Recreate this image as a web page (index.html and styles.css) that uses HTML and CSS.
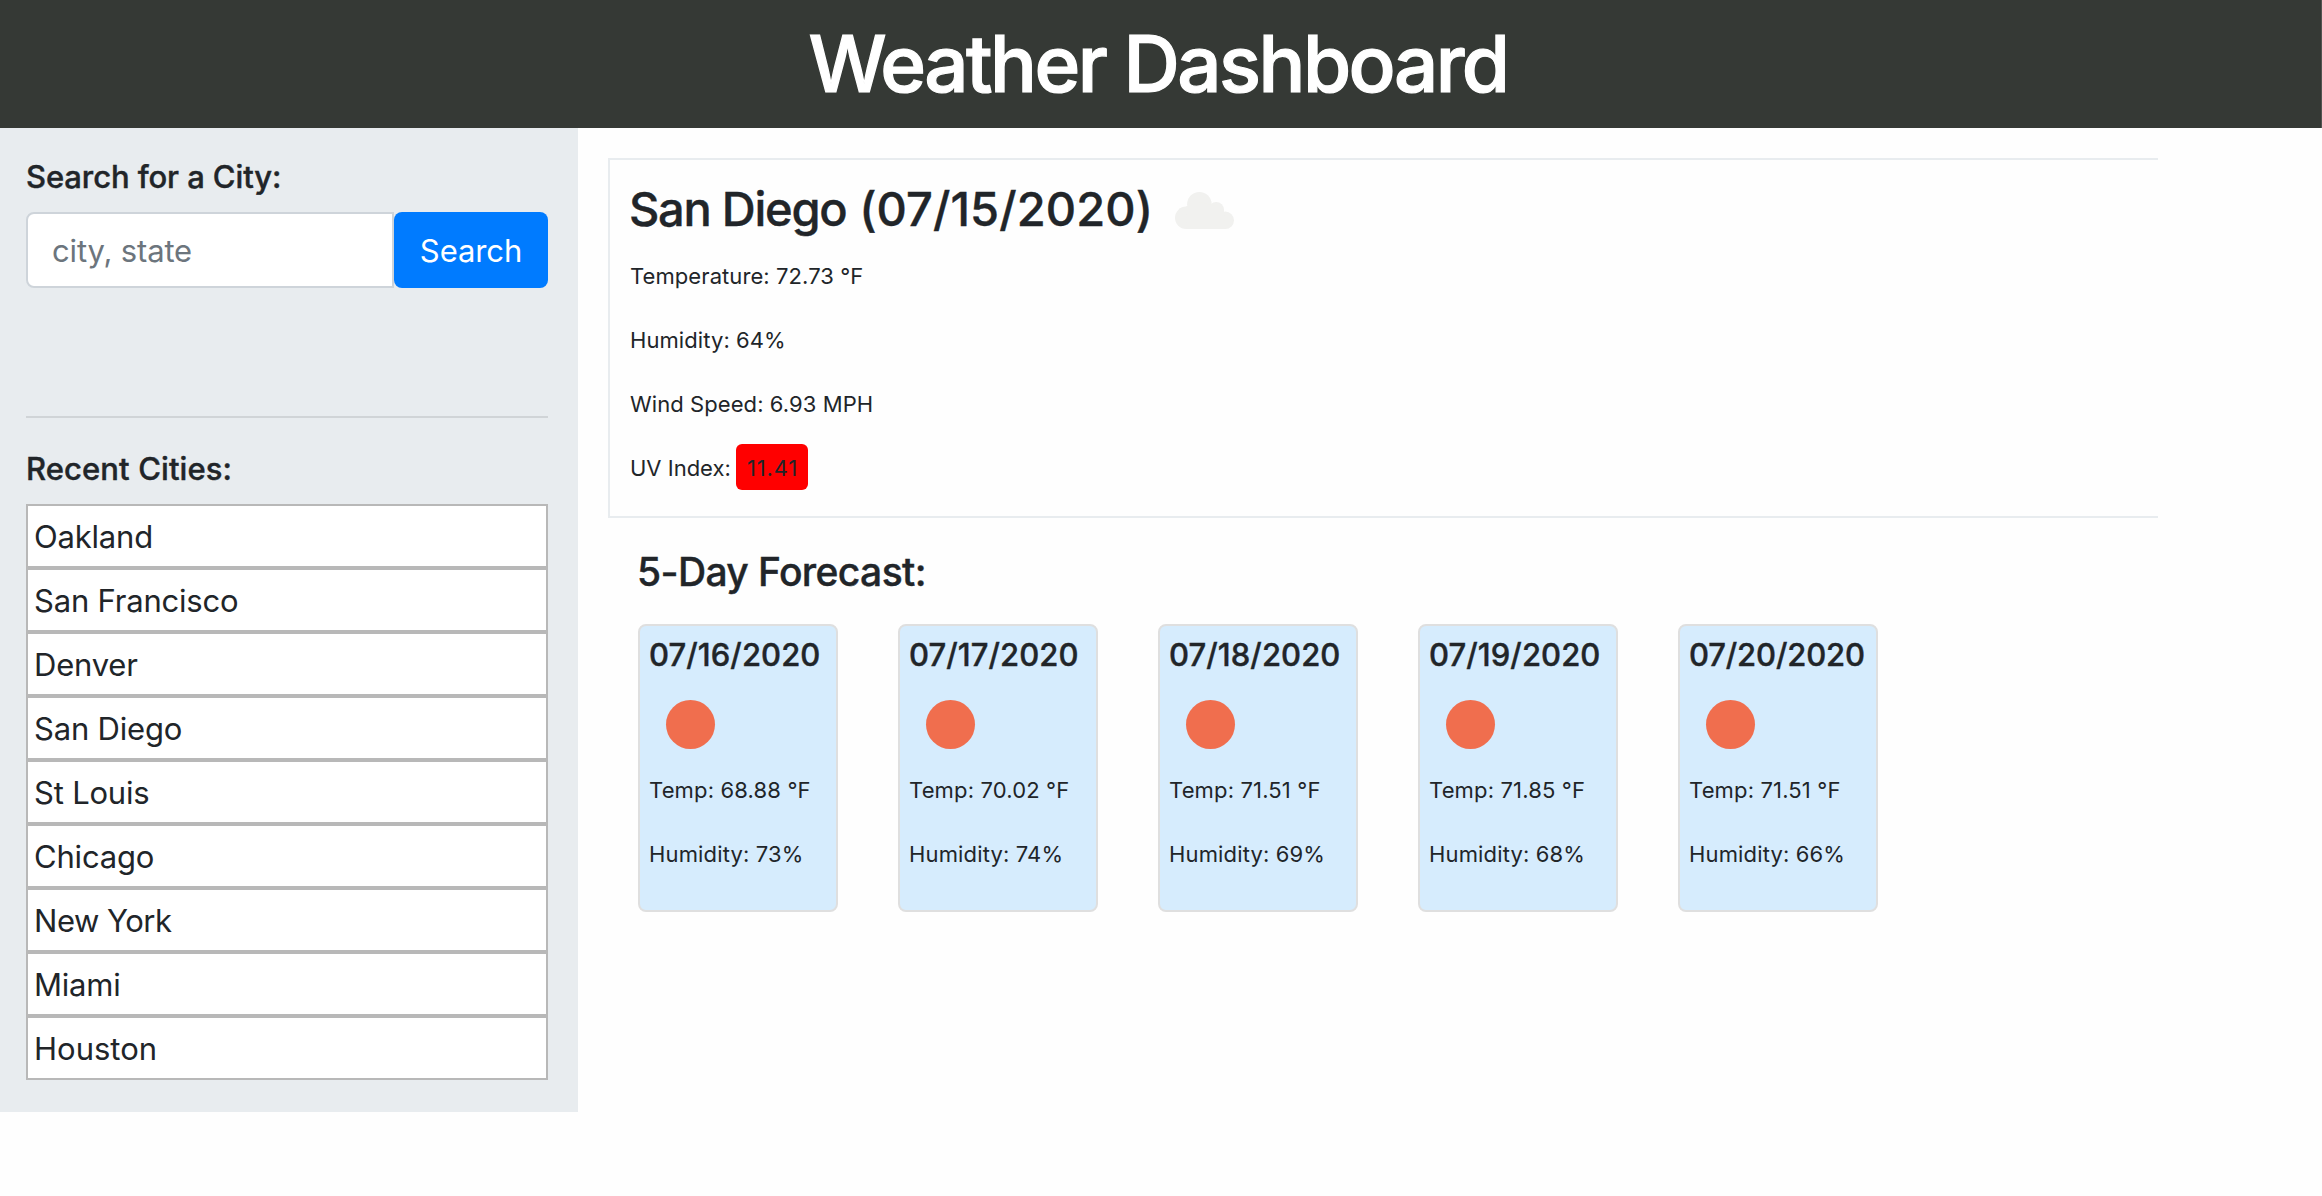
FILE: index.html
```html
<!DOCTYPE html>
<html lang="en">
<head>
<meta charset="utf-8">
<title>Weather Dashboard</title>
<link rel="stylesheet" href="styles.css">
</head>
<body>
<header class="header"><h1 class="header-title">Weather Dashboard</h1></header>
<div class="layout">
  <aside class="sidebar">
    <h2 class="side-title side-title-search">Search for a City:</h2>
    <form class="search">
      <input class="search-input" type="text" placeholder="city, state" aria-label="City">
      <button class="search-button" type="button">Search</button>
    </form>
    <hr class="divider">
    <h2 class="side-title">Recent Cities:</h2>
    <ul class="cities">
      <li class="city">Oakland</li>
      <li class="city">San Francisco</li>
      <li class="city">Denver</li>
      <li class="city">San Diego</li>
      <li class="city">St Louis</li>
      <li class="city">Chicago</li>
      <li class="city city-tight">New York</li>
      <li class="city">Miami</li>
      <li class="city city-loose">Houston</li>
    </ul>
  </aside>
  <main class="main">
    <section class="current">
      <div class="current-head">
        <h2 class="current-title"><span class="current-city">San Diego</span> (07/15/2020)</h2>
        <svg class="cloud" viewBox="0 0 59 37" fill="#f1f1ef" aria-hidden="true">
          <circle cx="24.4" cy="12.3" r="12.3"/>
          <circle cx="41.2" cy="17.8" r="7.8"/>
          <circle cx="11.2" cy="25.8" r="11.2"/>
          <circle cx="50.3" cy="28.3" r="8.7"/>
          <path d="M11 14.6L24 10L41 14L49 18V20L50.3 37H11.2Z"/>
        </svg>
      </div>
      <p class="stat">Temperature: 72.73 °F</p>
      <p class="stat">Humidity: 64%</p>
      <p class="stat">Wind Speed: 6.93 MPH</p>
      <p class="stat stat-uv"><span class="uv-label">UV Index:</span><span class="uv-badge">11.41</span></p>
    </section>
    <section class="forecast">
      <h3 class="forecast-title">5-Day Forecast:</h3>
      <div class="days">
        <article class="day"><h4 class="day-date">07/16/2020</h4><div class="sun"></div><p class="stat">Temp: 68.88 °F</p><p class="stat">Humidity: 73%</p></article>
        <article class="day"><h4 class="day-date">07/17/2020</h4><div class="sun"></div><p class="stat">Temp: 70.02 °F</p><p class="stat">Humidity: 74%</p></article>
        <article class="day"><h4 class="day-date">07/18/2020</h4><div class="sun"></div><p class="stat">Temp: 71.51 °F</p><p class="stat">Humidity: 69%</p></article>
        <article class="day"><h4 class="day-date">07/19/2020</h4><div class="sun"></div><p class="stat">Temp: 71.85 °F</p><p class="stat">Humidity: 68%</p></article>
        <article class="day"><h4 class="day-date day-date-wide">07/20/2020</h4><div class="sun"></div><p class="stat">Temp: 71.51 °F</p><p class="stat">Humidity: 66%</p></article>
      </div>
    </section>
  </main>
</div>
</body>
</html>
```
FILE: styles.css
```css
* { box-sizing: border-box; }
body { margin: 0; background: #fefefe; color: #212529; font-family: Inter, "Liberation Sans", sans-serif; }
h1, h2, h3, h4, p, ul { margin: 0; padding: 0; font-weight: 500; }
h1 { -webkit-text-stroke: 1.2px; }
h2, h3, h4 { -webkit-text-stroke: 0.4px; }

.header { height: 128px; background: #353935; border-right: 1px solid #515451; }
.header-title { color: #fff; font-size: 78px; line-height: 128px; letter-spacing: -2.55px; text-align: center; padding-right: 5px; }

.layout { display: flex; align-items: flex-start; }
.sidebar { width: 578px; padding: 30px 30px 32px 26px; background: #e8ecef; }
.side-title { font-size: 31px; line-height: 38px; letter-spacing: 0.1px; margin-bottom: 16px; }
.side-title-search { letter-spacing: -0.1px; }

.search { display: flex; height: 76px; }
.search-input {
  width: 368px; height: 76px; padding: 0 0 0 24px;
  border: 2px solid #ced4da; border-radius: 8px 0 0 8px;
  background: #fff; font: 400 31px Inter, "Liberation Sans", sans-serif; letter-spacing: -0.15px;
}
.search-input::placeholder { color: #6c757d; opacity: 1; }
.search-button {
  flex: 1; padding: 0; border: 0; border-radius: 8px; background: #007bff; color: #fff;
  font: 400 31px Inter, "Liberation Sans", sans-serif; letter-spacing: -0.1px;
}
.divider { height: 2px; margin: 128px 0 32px; border: 0; background: #d0d4d7; }

.cities { list-style: none; }
.city {
  height: 64px; padding-left: 6px; border: 2px solid #b8b8b8; background: #fff;
  font-size: 31px; font-weight: 400; line-height: 62px; letter-spacing: -0.2px;
}
.city-tight { letter-spacing: -0.48px; }
.city-loose { letter-spacing: 0; }

.main { width: 1550px; margin: 30px 0 0 30px; }
.current { height: 360px; padding: 20px 0 0 20px; border: 2px solid #e8ecef; border-right: 0; }
.current-head { display: flex; height: 58px; margin-bottom: 21px; }
.current-title { width: 546px; margin-left: -1px; font-size: 47px; line-height: 58px; letter-spacing: 0.1px; white-space: nowrap; }
.current-city { letter-spacing: -1.25px; }
.cloud { width: 59px; height: 37px; margin-top: 12px; }

.stat { font-size: 22px; font-weight: 400; line-height: 34px; letter-spacing: 0.08px; margin-bottom: 30px; white-space: nowrap; }
.stat-uv { display: flex; height: 34px; }
.uv-label { width: 106px; letter-spacing: 0; }
.uv-badge {
  width: 72px; height: 46px; margin-top: -7px; padding: 7px 0 0 1px;
  border-radius: 6px; background: #f00; text-align: center; letter-spacing: 0.8px;
}

.forecast { margin: 30px 0 0 30px; }
.forecast-title { margin: 0 0 28px -1px; font-size: 39px; line-height: 48px; letter-spacing: -0.62px; }
.days { display: flex; gap: 60px; }
.day { width: 200px; height: 288px; padding: 10px 0 0 9px; border: 2px solid #dfdfdf; border-radius: 8px; background: #d6ecfd; }
.day-date { font-size: 31px; line-height: 38px; letter-spacing: 0.08px; }
.day-date-wide { letter-spacing: -0.15px; }
.sun { width: 49px; height: 49px; margin: 26px 0 24px 17px; border-radius: 50%; background: #f06e4e; }
.day .stat { letter-spacing: 0.15px; }
```
